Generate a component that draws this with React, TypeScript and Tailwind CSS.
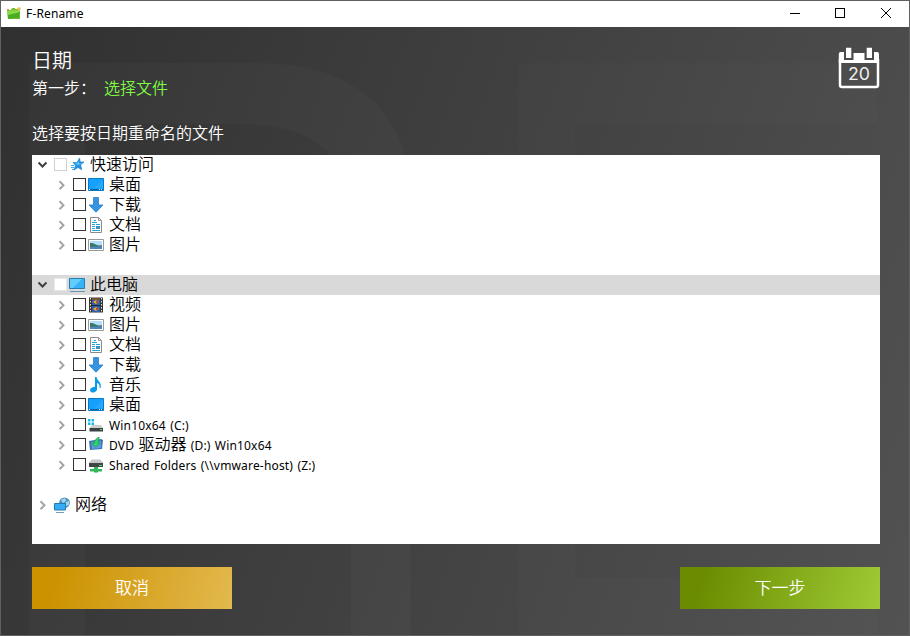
import React from 'react';

type IconName = 'star' | 'desktop' | 'download' | 'document' | 'picture' | 'pc' | 'video' | 'music' | 'drive' | 'dvd' | 'share' | 'network';

const drawings: Record<IconName, React.ReactNode> = {
  star: (
    <>
      <path d="m10.500 1 .8 4H15l-3.300 2.800 1 5L9 10.500l-4 2.500 1.500-4.500L4 5.500h4z" fill="#2196e8" stroke="#1679c4" strokeWidth=".6" />
      <path d="M10 3.500v3h3L9 8 6 6h3z" fill="#69c7ff" />
      <path d="M2 8.500h3M2 10.500h3M3 12.500h2" stroke="#45a7e7" />
    </>
  ),
  desktop: (
    <>
      <path d="M.5 1.500h15v12H.5z" fill="#14a0fb" stroke="#087ac7" />
      <path d="M15 2v9L5 12z" fill="#38b0ff" opacity=".45" />
      <path d="M1 12.500h14" stroke="#075ea3" />
      <path d="M1 12.500h1M11 12.500h1M13 12.500h1" stroke="#d9f2ff" />
    </>
  ),
  download: <path d="M5.500.5h5V8H15l-7 7.200L1 8h4.500z" fill="#3693e2" stroke="#2374bb" strokeWidth=".7" />,
  document: (
    <>
      <path d="M2.500.5h8l3 3v12h-11z" fill="#fff" stroke="#8b8b8b" />
      <path d="M10.500.5v3h3" fill="none" stroke="#999" />
      <path d="M6 3.500h2M4 5.500h5M4 7.500h3M8 7.500h4M4 9.500h3M4 11.500h3M4 13.500h8" stroke="#24a5df" />
      <path d="M8 9h4v3H8z" fill="#3f8fc0" />
    </>
  ),
  picture: (
    <>
      <path d="M.5 2.500h15v11H.5z" fill="#fff" stroke="#999" />
      <path d="M2 4h12v8H2z" fill="#b5dff8" />
      <path d="M2 6c3-.5 5 1 7 2s4 0 5 .5V12H2z" fill="#3d7763" />
      <path d="M2 10c4-1 8 0 12-1v3H2z" fill="#4b85bd" />
    </>
  ),
  pc: (
    <>
      <path d="M.5 1.500h15v10H.5z" fill="#35b2f8" stroke="#287cae" />
      <path d="M1 2h12L4 11H1z" fill="#79d5ff" opacity=".7" />
      <path d="M1 14.500h15" stroke="#6895b5" />
      <path d="M6 12h4v1H6z" fill="#dceef8" />
    </>
  ),
  video: (
    <>
      <path d="M1 .5h14v15H1z" fill="#343434" />
      <path d="M4 1h8v14H4z" fill="#315fab" />
      <path d="M4 1h8v2H4z" fill="#77552c" />
      <path d="m5 5 3-2 3 2-3 2zm0 7 3-2 3 2-3 2z" fill="#eaae2e" />
      <path d="M8 4h2v2H8zm0 7h2v2H8z" fill="#bd472e" />
      <path d="M4 8.500h8" stroke="#202020" />
      <path d="M2.500 1v14M13.500 1v14" stroke="#e4e4e4" strokeDasharray="1.500 1.500" />
    </>
  ),
  music: (
    <>
      <ellipse cx="5.500" cy="12.700" rx="3.500" ry="2.700" transform="rotate(-20 5.500 12.700)" fill="#079bea" />
      <path d="M7 0h1.600C9 4 14.500 5.500 12.500 11h-1c.7-3-.8-4.500-2.500-5V13H7z" fill="#079bea" />
    </>
  ),
  drive: (
    <>
      <path d="M0 2h2.500v2.500H0zm3.500 0H6v2.500H3.500zM0 5.500h2.500V8H0zm3.500 0H6V8H3.500z" fill="#18b9eb" />
      <path d="m4 8-2.500 3h13.500l-2-3z" fill="#cbcccc" />
      <path d="M1.500 11h13.500v3.500H1.500z" fill="#3c4143" />
      <path d="M12 12.500h2" stroke="#4bdf68" />
    </>
  ),
  dvd: (
    <>
      <path d="m1 4 12-2 2 1-1 9-12 1z" fill="#3975b1" />
      <path d="m3 5 10-1v7l-9 1z" fill="#5c9bdc" />
      <path d="M7.500 10 4 6h2.500c0-3 2-5 5-6-1 2-1.500 4-1 6H12z" fill="#2ad76c" stroke="#169f43" strokeWidth=".7" />
    </>
  ),
  share: (
    <>
      <path d="M3.500 2.500 1 6h14l-2.500-3.500z" fill="#c6c7c7" />
      <path d="M1 6h14v4H1z" fill="#404445" />
      <path d="M11 8.500h3" stroke="#50dc68" />
      <path d="M6 10h4v2h4v2.500h-4v1H6v-1H2V12h4z" fill="#35b55c" />
    </>
  ),
  network: (
    <>
      <circle cx="10.500" cy="5.800" r="5.400" fill="#4695c4" />
      <path d="m7 3 4-2 1 3-3 2zm5 2 3-1v4l-3 1z" fill="#a8d4e8" />
      <path d="M.5 6.500h11v6.500H.5z" fill="#35adf6" stroke="#247bb0" />
      <path d="M2 15.500h8" stroke="#6f9fbd" />
    </>
  ),
};

function Icon({ name }: { name: IconName }) {
  return <svg className="size-4 shrink-0" viewBox="0 0 16 16">{drawings[name]}</svg>;
}

function Chevron({ open = false }: { open?: boolean }) {
  return (
    <svg className="size-[13px] shrink-0" viewBox="0 0 13 13" fill="none" strokeWidth="2">
      {open ? <path d="m2.500 3.500 4 4 4-4" stroke="#404040" /> : <path d="m4.500 2.200 4 4-4 4" stroke="#a6a6a6" />}
    </svg>
  );
}

function Root({ name, label, active = false }: { name: IconName; label: string; active?: boolean }) {
  return (
    <div className={active ? 'flex h-5 items-center bg-[#d9d9d9] pl-1' : 'flex h-5 items-center pl-1'}>
      <Chevron open />
      <span className={active ? 'mr-0.5 mb-0.5 ml-[5px] size-[13px] border border-[#e8e8e8] bg-white' : 'mr-0.5 mb-0.5 ml-[5px] size-[13px] border border-[#d0d0d0] bg-white'} />
      <Icon name={name} />
      <span className="mb-0.5 ml-[5px] text-base leading-5 font-[350]">{label}</span>
    </div>
  );
}

function Item({ name, children, small = false }: { name: IconName; children: React.ReactNode; small?: boolean }) {
  return (
    <div className="flex h-5 items-center pl-[23px]">
      <Chevron />
      <span className="mr-0.5 mb-0.5 ml-[5px] size-[13px] shrink-0 border border-[#333] bg-white" />
      <Icon name={name} />
      <span className={small ? 'ml-[5px] pt-px text-[12px] leading-5 tracking-[.17px] whitespace-pre [word-spacing:1px]' : 'mb-0.5 ml-[5px] text-base leading-5 font-[350]'}>{children}</span>
    </div>
  );
}

export default function App() {
  return (
    <div className="relative flex h-[636px] w-[910px] flex-col overflow-hidden border border-[#606060] bg-[linear-gradient(110deg,#303030,#525252)] font-['Noto_Sans','Noto_Sans_CJK_SC',sans-serif] text-black">
      <svg className="absolute -top-px -left-px h-[636px] w-[910px]" viewBox="0 0 910 636" fill="#fff" fillOpacity=".023">
        <path fillRule="evenodd" d="M29 63H255C355 63 392 110 405 155V250c0 60-25 80-65 100 50 15 70 45 70 100v186h-59V460c0-50-30-80-80-80H85v256H29zM85 124v185h150c76 0 111-35 111-99 0-60-35-86-111-86z" />
        <path d="M519 63h358v61H575v190h270v58H575v206h302v58H519z" fillOpacity=".012" />
      </svg>
      <header className="relative flex h-[26px] shrink-0 items-center bg-white">
        <svg className="ml-[5px] size-4" viewBox="0 0 16 16">
          <path d="M1 4h4l1-2h3v1h5v10H2z" fill="#76bd32" />
          <path d="m1 5 13-1-1 8-11 1z" fill="#8cda48" />
          <path d="m2 9 12-3-1 6-11 1z" fill="#4aac20" />
          <path d="m11 2 3-1 1 2-3 2z" fill="#f1c04b" />
          <path d="M1 3h2v1H1z" fill="#f1913b" />
        </svg>
        <h1 className="ml-1 text-xs tracking-[.15px]">F-Rename</h1>
        <svg className="ml-auto h-[26px] w-[138px]" viewBox="0 0 138 26" fill="none" stroke="#000" shapeRendering="crispEdges">
          <path d="M19 12.500h10M64.500 7.500h9v9h-9z" />
          <path d="m110 7 10 10m0-10-10 10" shapeRendering="auto" />
        </svg>
      </header>
      <main className="relative flex flex-1 flex-col px-[31px] pr-[29px] text-white">
        <div className="flex h-[95px] justify-between pt-5">
          <div>
            <h2 className="pt-px text-xl leading-[26px] font-[350]">日期</h2>
            <p className="mt-0.5 flex text-base leading-6 font-[350]"><span>第一步：</span><span className="ml-2 text-[#80fa45]">选择文件</span></p>
          </div>
          <svg className="h-[42px] w-[42px]" viewBox="0 0 42 42" fill="none">
            <path d="M2 12v26q0 2 2 2h34q2 0 2-2V12" stroke="#fff" strokeWidth="2.500" />
            <path d="M.8 7q0-2 2-2H6v8h9.500V6h11v7H36V5h3q2 0 2 2v9H.8z" fill="#fff" />
            <path d="M8 .8h5.300V11H8zm20.700 0H34V11h-5.300z" fill="#fff" />
            <text x="21" y="33" textAnchor="middle" fill="#eee" textLength="22" lengthAdjust="spacingAndGlyphs" className="font-['Inter',sans-serif] text-[17px]">20</text>
          </svg>
        </div>
        <p className="h-[33px] text-base leading-[22px] font-[350]">选择要按日期重命名的文件</p>
        <section className="h-[389px] bg-white text-black">
          <Root name="star" label="快速访问" />
          <Item name="desktop">桌面</Item>
          <Item name="download">下载</Item>
          <Item name="document">文档</Item>
          <Item name="picture">图片</Item>
          <div className="h-5" />
          <Root name="pc" label="此电脑" active />
          <Item name="video">视频</Item>
          <Item name="picture">图片</Item>
          <Item name="document">文档</Item>
          <Item name="download">下载</Item>
          <Item name="music">音乐</Item>
          <Item name="desktop">桌面</Item>
          <Item name="drive" small>Win10x64 (C:)</Item>
          <Item name="dvd" small>DVD <span className="text-base leading-none font-[350] tracking-normal">驱动器</span> (D:) Win10x64</Item>
          <Item name="share" small>{'Shared Folders (\\\\vmware-host) (Z:)'}</Item>
          <div className="h-5" />
          <div className="flex h-5 items-center pl-1"><Chevron /><span className="ml-[5px] flex"><Icon name="network" /></span><span className="mb-0.5 ml-[5px] text-base leading-5 font-[350]">网络</span></div>
        </section>
        <footer className="mt-[23px] flex justify-between">
          <button className="h-[42px] w-[200px] bg-[linear-gradient(105deg,#cc9200_12%,#e3b94e)] text-[17px] font-[350]">取消</button>
          <button className="h-[42px] w-[200px] bg-[linear-gradient(105deg,#6b8c00_12%,#9fcb35)] text-[17px] font-[350]">下一步</button>
        </footer>
      </main>
    </div>
  );
}
